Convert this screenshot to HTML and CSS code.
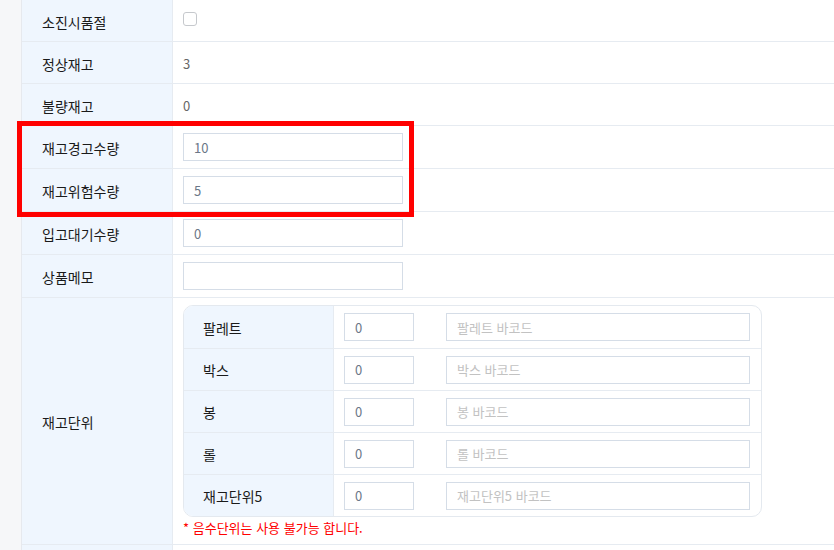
FILE: index.html
```html
<!DOCTYPE html>
<html lang="ko">
<head>
<meta charset="utf-8">
<link rel="stylesheet" href="styles.css">
</head>
<body>
<div class="page">
  <div class="side"></div>
  <div class="form">
    <div class="row text-row">
      <div class="label">소진시품절</div>
      <div class="value"><span class="checkbox"></span></div>
    </div>
    <div class="row text-row">
      <div class="label">정상재고</div>
      <div class="value"><span class="val">3</span></div>
    </div>
    <div class="row text-row">
      <div class="label">불량재고</div>
      <div class="value"><span class="val">0</span></div>
    </div>
    <div class="row input-row">
      <div class="label">재고경고수량</div>
      <div class="value"><input class="field" value="10"></div>
    </div>
    <div class="row input-row">
      <div class="label">재고위험수량</div>
      <div class="value"><input class="field" value="5"></div>
    </div>
    <div class="row input-row">
      <div class="label">입고대기수량</div>
      <div class="value"><input class="field" value="0"></div>
    </div>
    <div class="row input-row">
      <div class="label">상품메모</div>
      <div class="value"><input class="field" value=""></div>
    </div>
    <div class="row unit-row">
      <div class="label">재고단위</div>
      <div class="value unit-value">
        <div class="units">
          <div class="urow"><div class="ulabel">팔레트</div><div class="uval"><input class="qty" value="0"><input class="barcode" placeholder="팔레트 바코드"></div></div>
          <div class="urow"><div class="ulabel">박스</div><div class="uval"><input class="qty" value="0"><input class="barcode" placeholder="박스 바코드"></div></div>
          <div class="urow"><div class="ulabel">봉</div><div class="uval"><input class="qty" value="0"><input class="barcode" placeholder="봉 바코드"></div></div>
          <div class="urow"><div class="ulabel">롤</div><div class="uval"><input class="qty" value="0"><input class="barcode" placeholder="롤 바코드"></div></div>
          <div class="urow"><div class="ulabel">재고단위5</div><div class="uval"><input class="qty" value="0"><input class="barcode" placeholder="재고단위5 바코드"></div></div>
        </div>
        <div class="note">* 음수단위는 사용 불가능 합니다.</div>
      </div>
    </div>
    <div class="row last-row">
      <div class="label"></div>
      <div class="value"></div>
    </div>
  </div>
  <div class="highlight"></div>
</div>
</body>
</html>
```

FILE: styles.css
```css
* { box-sizing: border-box; }
html, body { margin: 0; padding: 0; background: #ffffff; }
body {
  font-family: "Noto Sans CJK KR", "Noto Sans", sans-serif;
  font-size: 13px;
  color: #1a1a1a;
  overflow: hidden;
  height: 550px;
}
.page {
  position: relative;
  display: flex;
  height: 550px;
  overflow: hidden;
}
.side {
  width: 22px;
  flex: none;
  background: #f6f7f9;
  border-right: 1px solid #e6e9ee;
}
.form {
  flex: 1;
  margin-top: -1px;
}
.row {
  display: grid;
  grid-template-columns: 151px 1fr;
  border-top: 1px solid #e6ebf1;
}
.text-row { height: 42px; }
.input-row { height: 43px; }
.unit-row { height: 247px; }
.last-row { height: 6px; }
.label {
  background: #eff6fe;
  border-right: 1px solid #e6ebf1;
  padding-left: 20px;
  display: flex;
  align-items: center;
  padding-top: 2px;
  font-size: 14px;
  color: #1a1a1a;
}
.value {
  display: flex;
  align-items: center;
  padding-left: 10px;
}
.val { color: #666; padding-top: 2px; }
.checkbox {
  width: 14px;
  height: 14px;
  border: 1px solid #c6c9cd;
  border-radius: 3px;
  background: #fff;
  margin-top: -4px;
}
.field {
  width: 220px;
  height: 28px;
  border: 1px solid #d5dde7;
  border-radius: 0;
  padding: 0 0 0 10px;
  font-family: inherit;
  font-size: 13px;
  color: #6b7787;
  background: #fff;
  outline: none;
}
.unit-value {
  flex-direction: column;
  align-items: flex-start;
  padding-top: 7px;
}
.units {
  width: 579px;
  border: 1px solid #e4e9ef;
  border-radius: 10px;
  overflow: hidden;
}
.urow {
  display: grid;
  grid-template-columns: 150px 1fr;
  height: 42px;
  border-top: 1px solid #e6ebf1;
}
.urow:first-child { border-top: none; }
.ulabel {
  background: #eff6fe;
  border-right: 1px solid #e6ebf1;
  padding-left: 19px;
  display: flex;
  align-items: center;
  padding-top: 1px;
  font-size: 14px;
  color: #1a1a1a;
}
.uval {
  display: flex;
  align-items: center;
  padding-left: 10px;
  gap: 32px;
}
.qty, .barcode {
  height: 28px;
  border: 1px solid #d5dde7;
  padding: 0 0 0 10px;
  font-family: inherit;
  font-size: 13px;
  background: #fff;
  outline: none;
  color: #6b7787;
}
.qty { width: 70px; }
.barcode { width: 304px; }
.barcode::placeholder { color: #c2c2c2; }
.note {
  color: #ff0000;
  font-size: 13px;
  line-height: 20px;
  margin-top: 1px;
}
.highlight {
  position: absolute;
  left: 17px;
  top: 121px;
  width: 397px;
  height: 96px;
  border: 5px solid #ff0000;
  pointer-events: none;
}
```
